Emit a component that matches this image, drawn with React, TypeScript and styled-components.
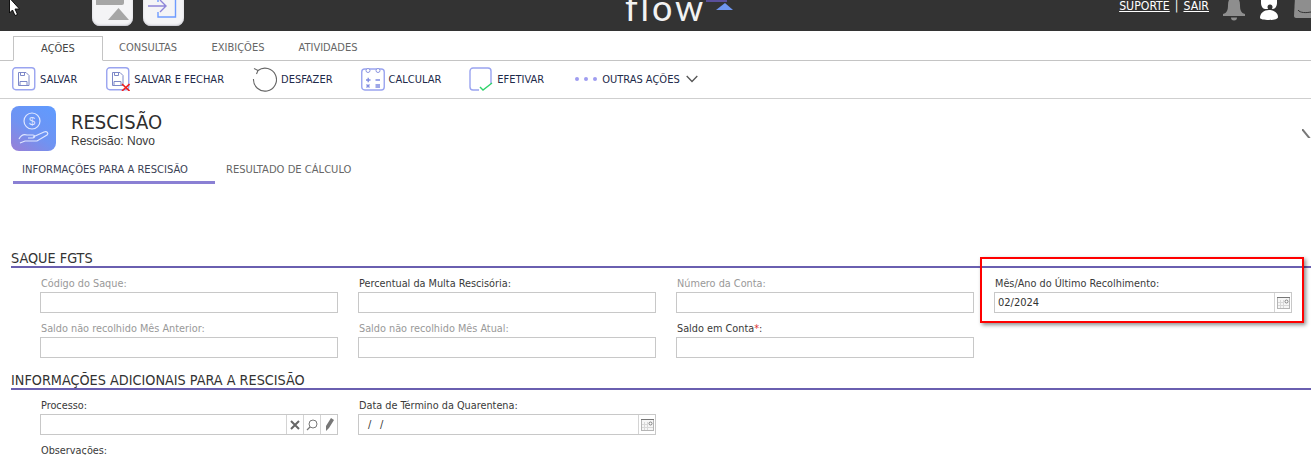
import React from 'react';
import styled, { createGlobalStyle } from 'styled-components';

const GlobalStyle = createGlobalStyle`
  html, body {
    margin: 0;
    padding: 0;
    background: #fff;
    overflow: hidden;
  }
  * { box-sizing: border-box; }
`;

const FONT = `"DejaVu Sans Condensed", "DejaVu Sans", sans-serif`;

const Page = styled.div`
  position: relative;
  width: 1311px;
  height: 455px;
  overflow: hidden;
  background: #fff;
  font-family: ${FONT};
  font-stretch: condensed;
  color: #333;
`;

const Header = styled.header`
  height: 31px;
  background: #333;
  display: flex;
  align-items: flex-end;
  overflow: hidden;
  padding: 0 0 5px 92px;
`;

const HeaderButtons = styled.div`
  display: flex;
  gap: 10px;
`;

const HeaderButton = styled.div`
  width: 41px;
  height: 40px;
  background: #f4f4f6;
  border-radius: 8px;
  display: flex;
  align-items: flex-end;
  justify-content: center;
  box-shadow: inset 0 -1px 2px #c8c8d0;
`;

const Logo = styled.div`
  position: relative;
  margin-left: 441px;
  display: flex;
  align-items: flex-start;
  height: 26px;
  align-self: flex-end;
  margin-bottom: 5px;
`;

const LogoWord = styled.span`
  font-family: "Lato", "Open Sans", sans-serif;
  font-size: 36px;
  font-weight: 400;
  line-height: 24px;
  color: #f2f2f2;
  letter-spacing: 2.9px;
`;

const LogoBar = styled.i`
  position: absolute;
  left: 81px;
  top: 5px;
  width: 21px;
  height: 2px;
  background: #5a4f9a;
`;

const LogoCaret = styled.svg`
  margin: 8px 0 0 10px;
`;

const HeaderRight = styled.div`
  margin-left: auto;
  display: flex;
  align-items: flex-start;
  align-self: flex-start;
  height: 31px;
`;

const SupportLinks = styled.div`
  font-size: 12.2px;
  line-height: 13px;
  color: #fff;
  display: flex;
  gap: 5px;
  margin-right: 14px;
  span { text-decoration: underline; }
  i { font-style: normal; }
`;

const HeaderIcons = styled.div`
  display: flex;
  gap: 13px;
  margin-top: -3px;
  svg { display: block; }
`;

const Tabs = styled.nav`
  height: 30px;
  border-bottom: 1px solid #c4c4c4;
  display: flex;
  align-items: flex-end;
  padding-left: 13px;
`;

const Tab = styled.div<{ $active?: boolean }>`
  height: ${p => (p.$active ? '25px' : '24px')};
  width: 90px;
  margin-bottom: ${p => (p.$active ? '-1px' : '0')};
  background: #fff;
  font-size: 11px;
  color: ${p => (p.$active ? '#444' : '#666')};
  border: ${p => (p.$active ? '1px solid #c4c4c4' : 'none')};
  border-bottom: ${p => (p.$active ? '1px solid #fff' : 'none')};
  display: flex;
  align-items: center;
  justify-content: center;
  padding-bottom: ${p => (p.$active ? '0' : '1px')};
`;

const Toolbar = styled.div`
  height: 38px;
  border-bottom: 1px solid #cfcfcf;
  display: flex;
  align-items: center;
  gap: 29px;
  padding: 0 0 2px 12px;
`;

const Action = styled.div`
  display: flex;
  align-items: center;
  gap: 4px;
  font-size: 11px;
  color: #1e2a4a;
  white-space: nowrap;
`;

const ActionLabel = styled.span`
  padding-top: 2px;
`;

const ActionIcon = styled.svg<{ $left?: number; $right?: number }>`
  display: block;
  flex: none;
  margin-left: ${p => p.$left ?? 0}px;
  margin-right: ${p => p.$right ?? 0}px;
`;

const TitleRow = styled.div`
  display: flex;
  align-items: flex-start;
  padding: 7px 0 0 11px;
  height: 54px;
`;

const TitleIcon = styled.div`
  width: 45px;
  height: 45px;
  border-radius: 8px;
  background: linear-gradient(35deg, #9a7fd6 0%, #6f93f2 45%, #5f9bff 100%);
  display: flex;
  align-items: center;
  justify-content: center;
`;

const TitleText = styled.div`
  margin-left: 15px;
  padding-top: 5px;
  flex: 1;
`;

const Title = styled.h1`
  margin: 0;
  font-family: ${FONT};
  font-weight: 400;
  font-size: 20px;
  line-height: 22px;
  color: #2e2e2e;
`;

const Subtitle = styled.div`
  font-family: "Liberation Sans", sans-serif;
  font-size: 12px;
  line-height: 14px;
  color: #3a3a3a;
  margin-top: 1px;
`;

const Collapse = styled.div`
  margin-top: 20px;
  width: 9px;
  height: 12px;
  overflow: hidden;
`;

const SubTabs = styled.div`
  display: flex;
  padding-left: 13px;
  height: 31px;
`;

const SubTab = styled.div<{ $active?: boolean }>`
  font-size: 11.1px;
  height: 31px;
  padding: 10px 27px 0 9px;
  white-space: nowrap;
  color: ${p => (p.$active ? '#3a3f55' : '#666')};
  border-bottom: 3px solid ${p => (p.$active ? '#8a80d4' : 'transparent')};
  margin-right: ${p => (p.$active ? '2px' : '0')};
`;

const Section = styled.section<{ $top: number }>`
  margin-top: ${p => p.$top}px;
  padding-left: 11px;
`;

const SectionTitle = styled.h2`
  margin: 0;
  height: 17px;
  font-family: ${FONT};
  font-weight: 400;
  font-size: 14.3px;
  line-height: 15px;
  color: #333;
  white-space: nowrap;
  border-bottom: 2px solid #6a5fb0;
`;

const FieldGrid = styled.div`
  display: grid;
  grid-template-columns: repeat(4, 298px);
  column-gap: 20px;
  row-gap: 9px;
  padding: 9px 0 0 29px;
`;

const Field = styled.div``;

const Label = styled.label<{ $muted?: boolean }>`
  display: block;
  font-size: 10.8px;
  line-height: 13px;
  height: 15px;
  padding-left: 1px;
  color: ${p => (p.$muted ? '#999' : '#3a3a3a')};
  em { color: #d33; font-style: normal; }
`;

const NotesField = styled(Field)`
  grid-column: 1 / 2;
  padding-top: 2px;
`;

const NotesLabel = styled(Label)`
  line-height: 9px;
  height: 9px;
`;

const InputBox = styled.div`
  height: 21px;
  border: 1px solid #c8c8c8;
  background: #fff;
  display: flex;
  align-items: center;
`;

const Value = styled.span`
  flex: 1;
  font-size: 11px;
  padding-left: 3px;
  color: #333;
`;

const DateValue = styled(Value)`
  padding-left: 9px;
  word-spacing: 5.5px;
`;

const AddOn = styled.div`
  width: 17px;
  height: 19px;
  border-left: 1px solid #d4d4d4;
  display: flex;
  align-items: center;
  justify-content: center;
  svg { display: block; }
`;

const Highlight = styled.div`
  position: absolute;
  left: 980px;
  top: 257px;
  width: 324px;
  height: 66px;
  border: 2px solid #f00;
  box-shadow: 2px 2px 4px rgba(0, 0, 0, 0.45);
  pointer-events: none;
`;

const Cursor = styled.svg`
  position: absolute;
  left: 8px;
  top: 0;
`;

const stroke = '#9aa4f0';

const SaveIcon = ({ cross }: { cross?: boolean }) => (
  <ActionIcon width="24" height="24" viewBox="0 0 24 24" fill="none">
    <rect x="0.75" y="0.75" width="22" height="22" rx="3" stroke={stroke} strokeWidth="1.4" />
    <path d="M6.5 5.5h7.5l3 3v10h-10.5z" stroke="#7d88c8" strokeWidth="1" />
    <path d="M8.5 5.5v3h4v-3M8 18.5v-4h7v4" stroke="#7d88c8" strokeWidth="1" />
    {cross && <path d="M16 17l7.5 7M23.5 17l-7.5 7" stroke="#f02020" strokeWidth="1.6" />}
  </ActionIcon>
);

const UndoIcon = () => (
  <ActionIcon $left={-1} width="25" height="26" viewBox="0 0 25 26" fill="none">
    <path d="M6 4.5A11.5 11.5 0 1 1 1.5 13" stroke="#666" strokeWidth="1.1" />
    <path d="M2 2.5l4 2-1.5 3.5" stroke="#666" strokeWidth="1.1" />
  </ActionIcon>
);

const CalcIcon = () => (
  <ActionIcon $left={-1} width="24" height="24" viewBox="0 0 24 24" fill="none">
    <rect x="0.75" y="2" width="22.5" height="21" rx="3" stroke={stroke} strokeWidth="1.4" />
    <circle cx="7" cy="3.5" r="2" fill="#fff" stroke="#8c96e0" />
    <circle cx="17" cy="3.5" r="2" fill="#fff" stroke="#8c96e0" />
    <path d="M5 13h4.5M7.2 10.800v4.500M14.500 13h4.500M5.500 17.500l3 3M8.500 17.500l-3 3M14.500 18h4.500M14.500 20h4.500" stroke="#7f8ae0" strokeWidth="1.3" />
  </ActionIcon>
);

const CheckIcon = () => (
  <ActionIcon $left={-1} $right={-1} width="25" height="24" viewBox="0 0 25 24" fill="none">
    <path d="M4 1h15a3 3 0 0 1 3 3v13M10 23H4a3 3 0 0 1-3-3V4a3 3 0 0 1 3-3" stroke={stroke} strokeWidth="1.4" />
    <path d="M11 20l3 3 9-7" stroke="#2fd36a" strokeWidth="1.4" />
  </ActionIcon>
);

const DotsIcon = () => (
  <ActionIcon $left={1} width="24" height="6" viewBox="0 0 24 6" fill="#9f9cf0">
    <circle cx="3" cy="3" r="2" />
    <circle cx="12" cy="3" r="2" />
    <circle cx="21" cy="3" r="2" />
  </ActionIcon>
);

const ChevronDown = () => (
  <ActionIcon $left={2} width="12" height="8" viewBox="0 0 12 8" fill="none">
    <path d="M0.7 1l5.3 5.5L11.3 1" stroke="#555" strokeWidth="1.3" />
  </ActionIcon>
);

const CalendarIcon = () => (
  <svg width="13" height="12" viewBox="0 0 13 12">
    <rect x="0.5" y="0.5" width="12" height="11" fill="#f6f6f6" stroke="#b5b5b5" />
    <path d="M0 0.5h13" stroke="#777" />
    <path d="M3.5 3v8M6.5 3v8M1 5.5h6M1 8.5h11" stroke="#d8d8d8" />
    <circle cx="9.5" cy="4.5" r="1.5" fill="#fff" stroke="#666" strokeWidth="0.8" />
  </svg>
);

const LabeledInput = ({ label, muted, children }: { label: React.ReactNode; muted?: boolean; children?: React.ReactNode }) => (
  <Field>
    <Label $muted={muted}>{label}</Label>
    <InputBox>{children}</InputBox>
  </Field>
);

export default function App() {
  return (
    <Page>
      <GlobalStyle />
      <Header>
        <HeaderButtons>
          <HeaderButton>
            <svg width="33" height="26" viewBox="0 0 33 26">
              <rect x="-1" y="-3" width="29" height="8" rx="2" fill="#a6a6a6" />
              <path d="M22.5 8L33 20H12z" fill="#a6a6a6" />
            </svg>
          </HeaderButton>
          <HeaderButton>
            <svg width="32" height="26" viewBox="0 0 32 26" fill="none">
              <path d="M10 0v2M10 12v5h17.5V0" stroke="#6e9bff" strokeWidth="1.4" />
              <path d="M0 6h17M12 0l6 6-6 6" stroke="#8d84d8" strokeWidth="1.4" />
            </svg>
          </HeaderButton>
        </HeaderButtons>
        <Logo>
          <LogoWord>flow</LogoWord>
          <LogoBar />
          <LogoCaret width="18" height="7" viewBox="0 0 18 7">
            <path d="M9 0l8 7H0z" fill="#6f96f0" />
          </LogoCaret>
        </Logo>
        <HeaderRight>
          <SupportLinks>
            <span>SUPORTE</span>
            <i>|</i>
            <span>SAIR</span>
          </SupportLinks>
          <HeaderIcons>
            <svg width="22" height="24" viewBox="0 0 22 24" fill="#8e8e8e">
              <path d="M11 0c-4 0-6 3-6 8 0 5-1 8-5 9v2h22v-2c-4-1-5-4-5-9 0-5-2-8-6-8zM8 20.5h6c0 2-1 3-3 3s-3-1-3-3z" />
            </svg>
            <svg width="22" height="24" viewBox="0 0 22 24" fill="#fff">
              <path d="M3 0h16v6c0 3-2 6-4 6h-8c-2 0-4-3-4-6zM2 21c0-5 4-8 9-8s9 3 9 7c0 2-4 3-9 3s-9-1-9-2z" />
              <circle cx="12" cy="10" r="2.5" fill="#333" />
            </svg>
            <svg width="18" height="22" viewBox="0 0 18 22">
              <path d="M2 0h16v21H3c-1 0-2-1-2-2z" fill="#8e8e8e" />
              <path d="M5 13c2 3 8 3 13 2" fill="none" stroke="#333" strokeWidth="1" />
            </svg>
          </HeaderIcons>
        </HeaderRight>
      </Header>

      <Tabs>
        <Tab $active>AÇÕES</Tab>
        <Tab>CONSULTAS</Tab>
        <Tab>EXIBIÇÕES</Tab>
        <Tab>ATIVIDADES</Tab>
      </Tabs>

      <Toolbar>
        <Action><SaveIcon /><ActionLabel>SALVAR</ActionLabel></Action>
        <Action><SaveIcon cross /><ActionLabel>SALVAR E FECHAR</ActionLabel></Action>
        <Action><UndoIcon /><ActionLabel>DESFAZER</ActionLabel></Action>
        <Action><CalcIcon /><ActionLabel>CALCULAR</ActionLabel></Action>
        <Action><CheckIcon /><ActionLabel>EFETIVAR</ActionLabel></Action>
        <Action><DotsIcon /><ActionLabel>OUTRAS AÇÕES</ActionLabel><ChevronDown /></Action>
      </Toolbar>

      <TitleRow>
        <TitleIcon>
          <svg width="34" height="34" viewBox="0 0 34 34" fill="none" stroke="#dfe7ff" strokeWidth="1.2">
            <circle cx="15" cy="9" r="8" />
            <text x="15" y="13" fontSize="11" textAnchor="middle" fill="#dfe7ff" stroke="none" fontFamily="Liberation Sans">$</text>
            <path d="M2 27c2-4 5-5 8-4h6c2 0 2 3 0 3h-5M16 25l11-5c3-1 5 1 3 3l-10 6H8l-5 2" />
          </svg>
        </TitleIcon>
        <TitleText>
          <Title>RESCISÃO</Title>
          <Subtitle>Rescisão: Novo</Subtitle>
        </TitleText>
        <Collapse>
          <svg width="9" height="12" viewBox="0 0 9 12" fill="none">
            <path d="M0 0l9 11" stroke="#777" strokeWidth="2" />
          </svg>
        </Collapse>
      </TitleRow>

      <SubTabs>
        <SubTab $active>INFORMAÇÕES PARA A RESCISÃO</SubTab>
        <SubTab>RESULTADO DE CÁLCULO</SubTab>
      </SubTabs>

      <Section $top={67}>
        <SectionTitle>SAQUE FGTS</SectionTitle>
        <FieldGrid>
          <LabeledInput muted label="Código do Saque:" />
          <LabeledInput label="Percentual da Multa Rescisória:" />
          <LabeledInput muted label="Número da Conta:" />
          <LabeledInput label="Mês/Ano do Último Recolhimento:">
            <Value>02/2024</Value>
            <AddOn><CalendarIcon /></AddOn>
          </LabeledInput>
          <LabeledInput muted label="Saldo não recolhido Mês Anterior:" />
          <LabeledInput muted label="Saldo não recolhido Mês Atual:" />
          <LabeledInput label={<>Saldo em Conta<em>*</em>:</>} />
        </FieldGrid>
      </Section>

      <Section $top={15}>
        <SectionTitle>INFORMAÇÕES ADICIONAIS PARA A RESCISÃO</SectionTitle>
        <FieldGrid>
          <LabeledInput label="Processo:">
            <Value />
            <AddOn>
              <svg width="10" height="10" viewBox="0 0 10 10"><path d="M1 1l8 8M9 1l-8 8" stroke="#666" strokeWidth="2" /></svg>
            </AddOn>
            <AddOn>
              <svg width="12" height="12" viewBox="0 0 12 12" fill="none"><circle cx="7" cy="5" r="4" stroke="#777" /><path d="M4 8l-3 3" stroke="#777" strokeWidth="1.2" /></svg>
            </AddOn>
            <AddOn>
              <svg width="9" height="13" viewBox="0 0 9 13"><path d="M6 0l3 2-5 8-3 3 0-5z" fill="#777" /></svg>
            </AddOn>
          </LabeledInput>
          <LabeledInput label="Data de Término da Quarentena:">
            <DateValue>/ /</DateValue>
            <AddOn><CalendarIcon /></AddOn>
          </LabeledInput>
          <NotesField>
            <NotesLabel>Observações:</NotesLabel>
          </NotesField>
        </FieldGrid>
      </Section>

      <Highlight />
      <Cursor width="12" height="18" viewBox="0 0 12 18">
        <path d="M1.5 -2v15l3-3 2.5 5.5 2.5-1-2.5-5.5h4.5z" fill="#fff" stroke="#000" strokeWidth="0.9" />
      </Cursor>
    </Page>
  );
}
